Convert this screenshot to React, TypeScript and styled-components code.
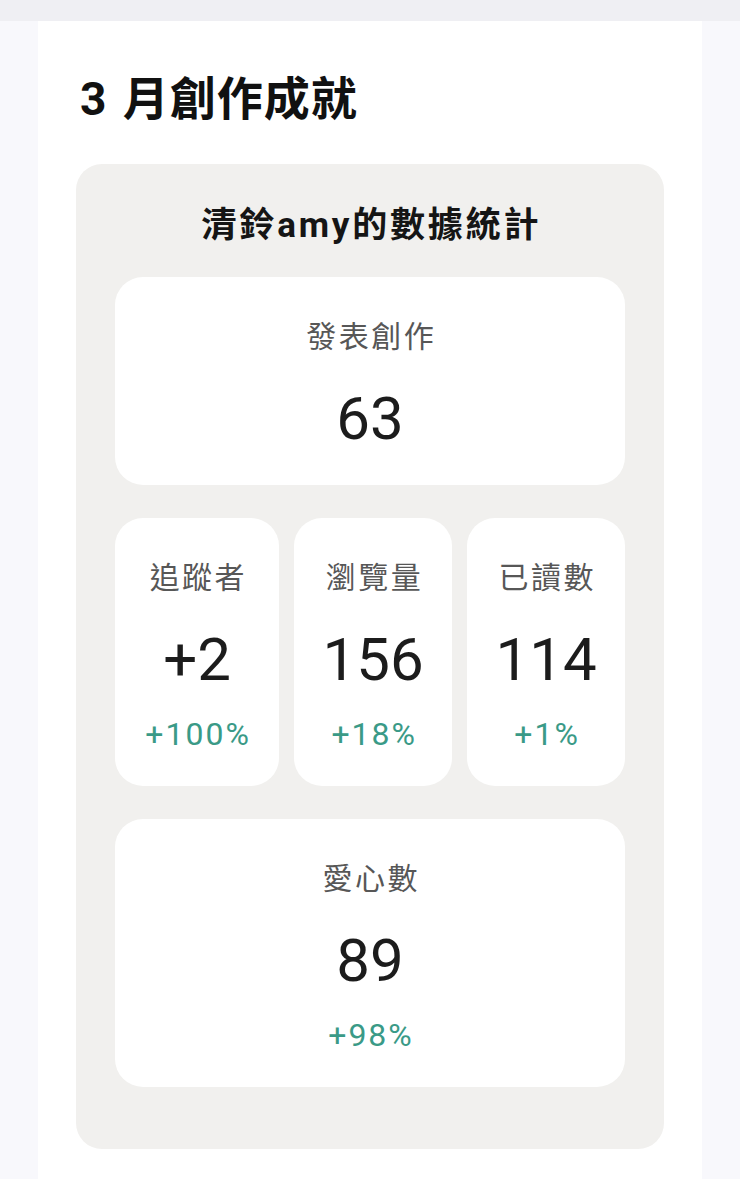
import React from "react";
import styled, { createGlobalStyle } from "styled-components";

const GlobalStyle = createGlobalStyle`
  html, body {
    margin: 0;
    padding: 0;
    background: #f8f8fc;
  }
  body {
    font-family: "Noto Sans CJK TC", "Noto Sans", sans-serif;
  }
`;

const TopStrip = styled.div`
  height: 21px;
  background: #efeff3;
`;

const Sheet = styled.main`
  margin: 0 38px;
  min-height: 1158px;
  background: #ffffff;
  padding-top: 46px;
  box-sizing: border-box;
`;

const Title = styled.h1`
  margin: 0;
  padding: 0 42px;
  font-family: Roboto, "Noto Sans CJK TC", sans-serif;
  font-size: 46px;
  font-weight: 700;
  line-height: 64px;
  letter-spacing: 1px;
  word-spacing: 3px;
  color: #111111;
`;

const Panel = styled.section`
  margin: 33px 38px 0;
  padding: 37px 39px 62px;
  background: #f1f0ee;
  border-radius: 26px;
  display: flex;
  flex-direction: column;
  gap: 33px;
`;

const PanelTitle = styled.h2`
  margin: 0 0 -6px;
  text-align: center;
  font-family: Roboto, "Noto Sans CJK TC", sans-serif;
  font-size: 35px;
  font-weight: 700;
  line-height: 49px;
  letter-spacing: 2.8px;
  padding-left: 2.8px;
  color: #151515;
`;

const Row = styled.div`
  display: flex;
  gap: 15px;
`;

const Card = styled.div<{ $wide?: boolean }>`
  flex: ${(p) => (p.$wide ? "none" : "1 1 auto")};
  background: #ffffff;
  border-radius: 28px;
  padding: 36px 8px 30px;
  display: flex;
  flex-direction: column;
  align-items: center;
`;

const Label = styled.div`
  font-family: "Noto Sans CJK TC", sans-serif;
  font-size: 30px;
  line-height: 42px;
  letter-spacing: 2.5px;
  padding-left: 2.5px;
  color: #575757;
  white-space: nowrap;
`;

const Value = styled.div`
  margin-top: 28px;
  font-family: Roboto, "Liberation Sans", sans-serif;
  font-size: 60px;
  line-height: 72px;
  color: #1c1c1c;
  white-space: nowrap;
`;

const Change = styled.div`
  margin-top: 16px;
  font-family: Roboto, "Liberation Sans", sans-serif;
  font-size: 32px;
  line-height: 44px;
  letter-spacing: 2px;
  padding-left: 2px;
  color: #3a9a87;
  white-space: nowrap;
`;

type Stat = { label: string; value: string; change?: string };

const trio: Stat[] = [
  { label: "追蹤者", value: "+2", change: "+100%" },
  { label: "瀏覽量", value: "156", change: "+18%" },
  { label: "已讀數", value: "114", change: "+1%" },
];

const StatCard: React.FC<Stat & { wide?: boolean }> = ({ label, value, change, wide }) => (
  <Card $wide={wide}>
    <Label>{label}</Label>
    <Value>{value}</Value>
    {change && <Change>{change}</Change>}
  </Card>
);

export default function App() {
  return (
    <>
      <GlobalStyle />
      <TopStrip />
      <Sheet>
        <Title>3 月創作成就</Title>
        <Panel>
          <PanelTitle>清鈴amy的數據統計</PanelTitle>
          <StatCard wide label="發表創作" value="63" />
          <Row>
            {trio.map((s) => (
              <StatCard key={s.label} {...s} />
            ))}
          </Row>
          <StatCard wide label="愛心數" value="89" change="+98%" />
        </Panel>
      </Sheet>
    </>
  );
}
